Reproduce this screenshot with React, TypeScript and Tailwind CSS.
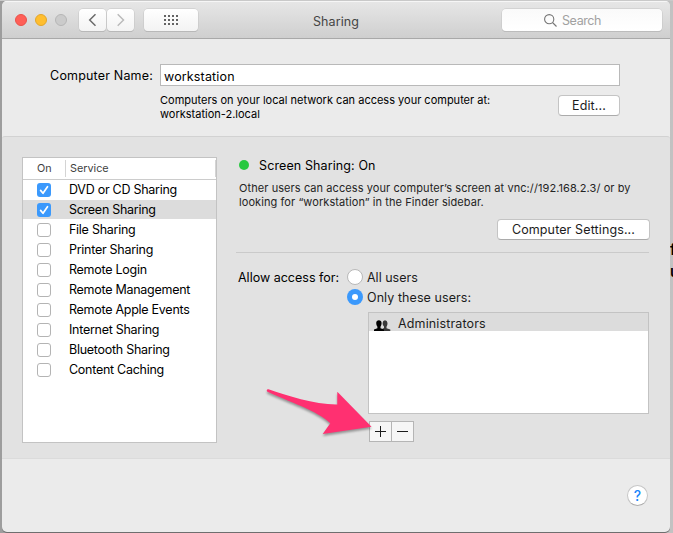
import React from "react";

const services = [
  { name: "DVD or CD Sharing", on: true },
  { name: "Screen Sharing", on: true, selected: true },
  { name: "File Sharing" },
  { name: "Printer Sharing" },
  { name: "Remote Login" },
  { name: "Remote Management" },
  { name: "Remote Apple Events" },
  { name: "Internet Sharing" },
  { name: "Bluetooth Sharing" },
  { name: "Content Caching" },
];

function Checkbox({ on }: { on?: boolean }) {
  if (!on) {
    return <span className="h-[14px] w-[14px] shrink-0 rounded-[3px] border border-[#b4b4b4] bg-white" />;
  }
  return (
    <span className="h-[14px] w-[14px] shrink-0 rounded-[3px] bg-[#3b99fc]">
      <svg width="14" height="14" viewBox="0 0 14 14" fill="none">
        <path d="M3.6 7.4 6 10.3 10.5 3.7" stroke="#fff" strokeWidth="1.7" strokeLinecap="round" strokeLinejoin="round" />
      </svg>
    </span>
  );
}

function TitleBar() {
  return (
    <header className="relative flex h-[38px] shrink-0 items-start border-b border-[#a9a9a9] bg-linear-to-b from-[#e7e7e7] to-[#cfcfcf] pl-[13px] shadow-[inset_0_1px_0_#f6f6f6]">
      <div className="flex gap-2 pt-[13px]">
        <span className="h-3 w-3 rounded-full border border-[#e9514a] bg-[#ff5f57]" />
        <span className="h-3 w-3 rounded-full border border-[#e3a62a] bg-[#ffbe2f]" />
        <span className="h-3 w-3 rounded-full border border-[#b6b6b6] bg-[#cbcbcb]" />
      </div>
      <div className="ml-3 flex gap-px pt-2">
        <span className="flex h-[22px] w-[27px] items-center justify-center rounded-[4px] bg-linear-to-b from-white to-[#f3f3f3] shadow-[0_0_0_0.5px_#c4c4c4,0_1px_0_#adadad]">
          <svg width="27" height="22" viewBox="0 0 27 22" fill="none">
            <path d="m16.5 5.2-5.8 5.8 5.8 5.8" stroke="#6c6c6c" strokeWidth="1.5" />
          </svg>
        </span>
        <span className="flex h-[22px] w-[27px] items-center justify-center rounded-[4px] bg-linear-to-b from-white to-[#f3f3f3] shadow-[0_0_0_0.5px_#c4c4c4,0_1px_0_#adadad]">
          <svg width="27" height="22" viewBox="0 0 27 22" fill="none">
            <path d="m10.7 5.2 5.8 5.8-5.8 5.8" stroke="#bababa" strokeWidth="1.5" />
          </svg>
        </span>
      </div>
      <div className="ml-[10px] pt-2">
        <div className="flex h-[22px] w-[54px] items-center justify-center rounded-[4px] bg-linear-to-b from-white to-[#f3f3f3] shadow-[0_0_0_0.5px_#c4c4c4,0_1px_0_#adadad]">
          <svg width="14" height="10" viewBox="0 0 14 10" fill="#636363">
            {[0, 4, 8].map((y) => [0, 4, 8, 12].map((x) => <rect key={`${x}-${y}`} x={x} y={y} width="2" height="2" />))}
          </svg>
        </div>
      </div>
      <h1 className="ml-[115px] pt-[13px] text-[12.5px] leading-4 tracking-[0.1px] text-[#454545]">Sharing</h1>
      <div className="mt-2 mr-[8px] ml-auto flex h-[22px] w-[160px] items-center rounded-[4px] bg-linear-to-b from-[#fafafa] to-white pl-[42px] shadow-[0_0_0_0.5px_#c4c4c4,0_1px_0_#b4b4b4]">
        <svg width="13" height="13" viewBox="0 0 13 13" fill="none" stroke="#757575" strokeWidth="1.1">
          <circle cx="5.2" cy="5.2" r="4.6" />
          <path d="m8.5 8.5 4 4" />
        </svg>
        <span className="ml-[5px] pt-px text-[12.5px] leading-4 tracking-[-0.4px] text-[#a1a1a1]">Search</span>
      </div>
    </header>
  );
}

function Button({ children, className }: { children: React.ReactNode; className: string }) {
  return (
    <button
      className={`flex items-center justify-center rounded-[4px] border border-[#c4c4c4] border-b-[#ababab] bg-white text-[12.5px] leading-4 tracking-[0.12px] text-[#1c1c1c] ${className}`}
    >
      {children}
    </button>
  );
}

export default function App() {
  return (
    <div className="relative h-[533px] w-[673px] overflow-hidden bg-linear-to-r from-[#9d9d9d] to-[#c2c2c2] pt-px pr-[3px] pl-[2px] font-['Inter','Liberation_Sans',sans-serif] text-[12.5px] leading-4 text-black">
      <div className="absolute top-0 right-0 left-0 h-px bg-[#c9c9c9]" />
      <div className="absolute top-[239px] right-0 flex w-[3px] flex-col overflow-hidden text-[15px] leading-[22px] font-semibold text-black">
        <span>f</span>
        <span>u</span>
      </div>
      <div className="relative flex h-[531px] w-[668px] flex-col overflow-hidden rounded-[5px] bg-[#ebebeb] shadow-[0_1px_0_#6e6e6e]">
        <TitleBar />

        <section className="flex h-[97px] shrink-0">
          <label className="mt-[29px] w-[151px] shrink-0 text-right tracking-[0.18px]">Computer Name:</label>
          <div className="mt-[25px] ml-[7px] w-[460px]">
            <div className="flex h-[22px] items-center border border-[#b9b9b9] bg-white pt-[4px] pl-[3px] tracking-[0.15px]">
              workstation
            </div>
            <div className="flex justify-between">
              <p className="pt-[7px] text-[11px] leading-[14px] whitespace-nowrap">
                Computers on your local network can access your computer at:
                <br />
                workstation-2.local
              </p>
              <Button className="mt-[9px] h-[21px] w-[62px]">Edit...</Button>
            </div>
          </div>
        </section>

        <main className="flex h-[323px] shrink-0 rounded-t-[3px] border-t border-b border-t-[#d2d2d2] border-b-[#dbdbdb] bg-[#e2e2e2]">
          <div className="mt-5 ml-5 h-[286px] w-[195px] shrink-0 border border-[#c3c3c3] bg-white">
            <div className="flex h-[22px] items-center border-b border-[#cccccc] text-[10.8px] text-[#3f3f3f]">
              <span className="w-[42px] pl-[14px]">On</span>
              <span className="h-[17px] w-px bg-[#d4d4d4]" />
              <span className="pl-1">Service</span>
              <span className="ml-auto h-[17px] w-px bg-[#d4d4d4]" />
            </div>
            <ul>
              {services.map((s) => (
                <li key={s.name} className="flex h-5 items-start">
                  <div className={`flex h-[19px] w-full items-center pl-[14px] ${s.selected ? "bg-[#dcdcdc]" : ""}`}>
                    <Checkbox on={s.on} />
                    <span className="ml-[18px] tracking-[-0.27px] whitespace-nowrap">{s.name}</span>
                  </div>
                </li>
              ))}
            </ul>
          </div>

          <div className="ml-[17px] w-[416px]">
            <div className="mt-[20px] flex items-center pl-[5px]">
              <span className="h-[10px] w-[10px] rounded-full bg-[#28c840]" />
              <span className="ml-[10px] pt-[2px] leading-[14px] tracking-[0.11px]">Screen Sharing: On</span>
            </div>
            <p className="mt-[8px] pl-[5px] text-[11px] leading-[14px] tracking-[0.08px] whitespace-nowrap text-[#242424]">
              Other users can access your computer’s screen at vnc://192.168.2.3/ or by
              <br />
              looking for “workstation” in the Finder sidebar.
            </p>
            <Button className="mt-[10px] ml-auto h-[21px] w-[153px]">Computer Settings...</Button>
            <div className="mt-[12px] ml-[2px] h-px w-[413px] bg-[#cacaca]" />

            <div className="mt-[16px] flex">
              <span className="w-[113px] shrink-0 pt-px pl-[4px] whitespace-nowrap">Allow access for:</span>
              <div className="flex flex-col gap-1">
                <div className="flex items-center">
                  <span className="h-4 w-4 rounded-full border border-[#b8b8b8] bg-white" />
                  <span className="ml-[4px] pt-[2px] leading-[14px] text-[#1c1c1c]">All users</span>
                </div>
                <div className="flex items-center">
                  <span className="flex h-4 w-4 items-center justify-center rounded-full bg-[#3b99fc]">
                    <span className="h-[6px] w-[6px] rounded-full bg-white" />
                  </span>
                  <span className="ml-[4px] pt-[2px] leading-[14px] tracking-[0.07px] text-[#1c1c1c]">Only these users:</span>
                </div>
              </div>
            </div>

            <div className="mt-[7px] ml-[134px] h-[102px] w-[281px] border border-[#c3c3c3] bg-white">
              <div className="flex h-[18px] items-end bg-[#dcdcdc] pl-[5px]">
                <svg width="17" height="11" viewBox="0 0 17 11">
                  <path d="M8.5 11V8.8L10 8V6.5Q8.5 5 8.6 3 8.8.3 11 .3T13.5 3Q13.6 5 12.5 6.7V8.2L16.3 9.6V11Z" fill="#383838" />
                  <path d="M0 11V9.6L3.4 8.2V6.8Q2.2 5.5 2.2 3 2.4.2 4.9.2T7.6 3Q7.6 5.5 6.5 6.8V8.2L10 9.6V11Z" fill="#000" />
                </svg>
                <span className="relative top-px ml-[7px] tracking-[0.14px] text-[#1c1c1c]">Administrators</span>
              </div>
            </div>

            <div className="mt-[7px] ml-[135px] flex h-[21px] w-[45px] border border-[#b5b5b5] bg-[#f6f6f6]">
              <span className="w-[22px] border-r border-[#b5b5b5]">
                <svg width="21" height="19" viewBox="0 0 21 19" stroke="#1c1c1c" strokeWidth="1">
                  <path d="M5 9.5h11M10.5 4v11" />
                </svg>
              </span>
              <span>
                <svg width="21" height="19" viewBox="0 0 21 19" stroke="#1c1c1c" strokeWidth="1">
                  <path d="M5 9.5h11" />
                </svg>
              </span>
            </div>
          </div>
        </main>

        <footer className="flex grow justify-end pt-[26px] pr-[22px]">
          <span className="flex h-[21px] w-[21px] items-center justify-center rounded-full border border-[#c6c6c6] border-b-[#ababab] bg-white text-[14px] font-medium text-[#1a86fb]">
            ?
          </span>
        </footer>
      </div>

      <svg className="absolute top-[380px] left-[260px] drop-shadow-[0_2px_1px_rgba(0,0,0,0.35)]" width="120" height="64" viewBox="260 380 120 64">
        <path
          d="M268.5 389.3C287 395.5 315 404.8 337.3 404.5V391.7L371.5 426.7 322.7 434 330.3 423.3C318 411 287 401 267.5 391.8 266 390.8 267 388.9 268.5 389.3Z"
          fill="#ff3071"
        />
      </svg>
    </div>
  );
}
